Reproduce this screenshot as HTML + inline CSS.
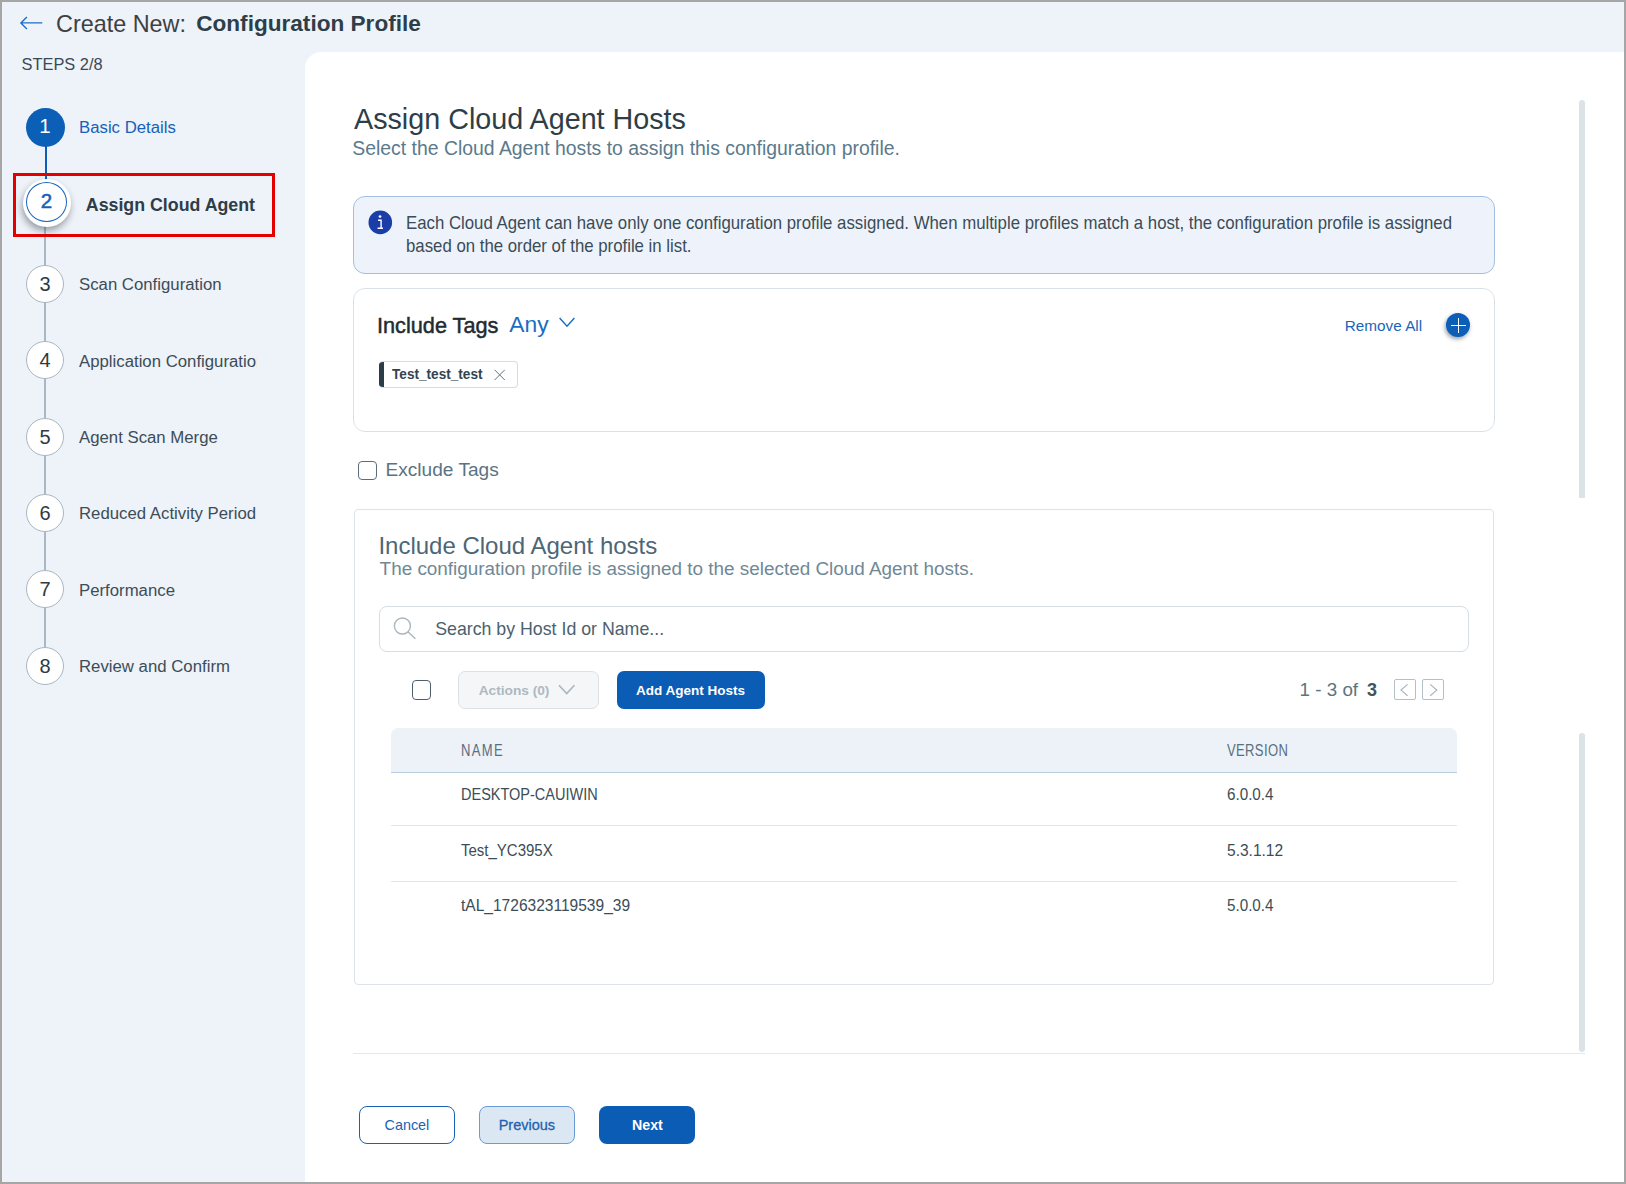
<!DOCTYPE html>
<html><head><meta charset="utf-8">
<style>
*{box-sizing:border-box;margin:0;padding:0}
html,body{width:1626px;height:1184px;overflow:hidden}
body{position:relative;background:#eef2f9;font-family:"Liberation Sans",sans-serif;color:#2c3d47}
.frame{position:absolute;left:0;top:0;width:1626px;height:1184px;border:2px solid #a6a6a6;z-index:50;pointer-events:none}
.t{position:absolute;white-space:nowrap;line-height:1}
.abs{position:absolute}
.panel{position:absolute;left:305px;top:52px;width:1321px;height:1132px;background:#fff;border-top-left-radius:16px}
.circ{position:absolute;border-radius:50%;background:#fff;border:1px solid #a9b7c0}
.vline{position:absolute;width:2px;background:#a9b8c2}
.lbl{font-size:17.3px;color:#3c4d57;transform:scaleX(.97);transform-origin:0 0}
.num{position:absolute;font-size:20px;line-height:1;color:#2f3a40;text-align:center;width:38px}
</style></head>
<body>
<div class="frame"></div>

<!-- header -->
<svg class="abs" style="left:18px;top:14px" width="30" height="20" viewBox="0 0 30 20">
 <path d="M3 8.9 H24.3 M8.9 3 L2.9 8.9 L8.9 14.9" fill="none" stroke="#1d6fc8" stroke-width="1.4" stroke-linecap="butt"/>
</svg>
<div class="t" style="left:56px;top:12.6px;font-size:23.4px;color:#3d4144">Create New:</div>
<div class="t" style="left:196.2px;top:12.5px;font-size:22.6px;font-weight:700;color:#2d3e48">Configuration Profile</div>

<div class="t" style="left:21.5px;top:55.6px;font-size:16.4px;color:#3a4a54">STEPS 2/8</div>

<!-- stepper -->
<div class="abs" style="left:45px;top:146px;width:2px;height:34px;background:#0b5fb6"></div>
<div class="vline" style="left:44px;top:224px;height:42px"></div>
<div class="vline" style="left:44px;top:302px;height:59px"></div>
<div class="vline" style="left:44px;top:378px;height:59px"></div>
<div class="vline" style="left:44px;top:455px;height:59px"></div>
<div class="vline" style="left:44px;top:531px;height:59px"></div>
<div class="vline" style="left:44px;top:607px;height:59px"></div>

<div class="abs" style="left:25.8px;top:107.8px;width:39.2px;height:39.2px;border-radius:50%;background:#0b5fb6"></div>
<div class="num" style="left:26px;top:115.5px;color:#fff;font-size:20.5px">1</div>
<div class="t lbl" style="left:79.4px;top:119.4px;color:#1562b8">Basic Details</div>

<div class="abs" style="left:13px;top:173px;width:262px;height:64px;border:3px solid #e50000"></div>
<div class="abs" style="left:23px;top:179.3px;width:48px;height:47.6px;border-radius:50%;background:#fff;box-shadow:-1px 4px 7px rgba(30,40,50,.42)"></div>
<div class="abs" style="left:25.8px;top:181.9px;width:41.4px;height:40.4px;border-radius:50%;border:1.3px solid #1a67c0"></div>
<div class="num" style="left:27.5px;top:191.3px;color:#1a5fb4;font-size:20.5px;-webkit-text-stroke:0.55px #1a5fb4">2</div>
<div class="t" style="left:85.8px;top:197.2px;font-size:17.8px;font-weight:700;color:#2d3e48">Assign Cloud Agent</div>

<div class="circ" style="left:26px;top:265px;width:38px;height:38px"></div>
<div class="num" style="left:26px;top:274px">3</div>
<div class="t lbl" style="left:78.5px;top:276.2px">Scan Configuration</div>

<div class="circ" style="left:26px;top:341.3px;width:38px;height:38px"></div>
<div class="num" style="left:26px;top:350.3px">4</div>
<div class="t lbl" style="left:78.5px;top:352.6px;width:182.8px;overflow:hidden">Application Configuration</div>

<div class="circ" style="left:26px;top:417.6px;width:38px;height:38px"></div>
<div class="num" style="left:26px;top:426.6px">5</div>
<div class="t lbl" style="left:78.5px;top:429px">Agent Scan Merge</div>

<div class="circ" style="left:26px;top:493.9px;width:38px;height:38px"></div>
<div class="num" style="left:26px;top:502.9px">6</div>
<div class="t lbl" style="left:78.5px;top:505.3px">Reduced Activity Period</div>

<div class="circ" style="left:26px;top:570.2px;width:38px;height:38px"></div>
<div class="num" style="left:26px;top:579.2px">7</div>
<div class="t lbl" style="left:78.5px;top:581.7px">Performance</div>

<div class="circ" style="left:26px;top:646.5px;width:38px;height:38px"></div>
<div class="num" style="left:26px;top:655.5px">8</div>
<div class="t lbl" style="left:78.5px;top:658.1px">Review and Confirm</div>

<!-- main panel -->
<div class="panel"></div>

<div class="t" style="left:353.7px;top:103.5px;font-size:30px;color:#2d3e48;transform:scaleX(.957);transform-origin:0 0">Assign Cloud Agent Hosts</div>
<div class="t" style="left:352.3px;top:138.8px;font-size:19.4px;color:#5b7a8c">Select the Cloud Agent hosts to assign this configuration profile.</div>

<!-- info box -->
<div class="abs" style="left:353px;top:196px;width:1142px;height:77.5px;background:#eef3fb;border:1px solid #a3bfe2;border-radius:12px"></div>
<svg class="abs" style="left:368px;top:210px" width="25" height="25" viewBox="0 0 25 25"><circle cx="12.3" cy="12.4" r="11.8" fill="#1b3da8"/><circle cx="12" cy="6.5" r="1.35" fill="#fff"/><path d="M10 10.3 H13.1 V17.6 M9.6 18.2 H15" fill="none" stroke="#fff" stroke-width="1.4"/></svg>
<div class="t" style="left:406.4px;top:215px;font-size:17.8px;color:#3a4c57;transform:scaleX(.944);transform-origin:0 0">Each Cloud Agent can have only one configuration profile assigned. When multiple profiles match a host, the configuration profile is assigned</div>
<div class="t" style="left:406.4px;top:237.8px;font-size:17.8px;color:#3a4c57;transform:scaleX(.944);transform-origin:0 0">based on the order of the profile in list.</div>

<!-- include tags -->
<div class="abs" style="left:353px;top:288px;width:1142px;height:143.5px;border:1px solid #dbe2e7;border-radius:12px"></div>
<div class="t" style="left:376.8px;top:315.2px;font-size:22.6px;color:#1f2b31;-webkit-text-stroke:0.5px #1f2b31;transform:scaleX(.96);transform-origin:0 0">Include Tags</div>
<div class="t" style="left:509.3px;top:312.5px;font-size:22.8px;color:#1a6cc2">Any</div>
<svg class="abs" style="left:556px;top:313px" width="24" height="18" viewBox="0 0 24 18"><path d="M3.6 5 L11 13.3 L18.4 5" fill="none" stroke="#1a6cc2" stroke-width="1.4"/></svg>
<div class="t" style="left:1344.8px;top:318px;font-size:15.3px;color:#1866ba">Remove All</div>
<div class="abs" style="left:1446px;top:313px;width:24px;height:24px;border-radius:50%;background:#0b5fb6;box-shadow:-1px 2px 4px rgba(20,40,60,.45)"></div>
<div class="abs" style="left:1451px;top:324.5px;width:15px;height:1.5px;background:#fff"></div>
<div class="abs" style="left:1457.6px;top:318px;width:1.5px;height:15px;background:#fff"></div>

<div class="abs" style="left:378.5px;top:360.6px;width:139.3px;height:27.6px;border:1px solid #d5dde3;border-left:0;border-radius:4px;overflow:hidden"><div style="position:absolute;left:0;top:-1px;width:5.4px;height:27.6px;background:#2b3d47"></div></div>
<div class="t" style="left:391.8px;top:366.5px;font-size:14.8px;font-weight:700;color:#33444e;transform:scaleX(.92);transform-origin:0 0">Test_test_test</div>
<svg class="abs" style="left:492px;top:367px" width="16" height="16" viewBox="0 0 16 16"><path d="M2.6 2.8 L12.8 13 M12.8 2.8 L2.6 13" fill="none" stroke="#66757e" stroke-width="1"/></svg>

<!-- exclude tags -->
<div class="abs" style="left:358px;top:461px;width:19px;height:19px;border:1.5px solid #5a6f7d;border-radius:4px"></div>
<div class="t" style="left:385.5px;top:460px;font-size:19.1px;color:#5a7383">Exclude Tags</div>

<!-- hosts section -->
<div class="abs" style="left:354px;top:509px;width:1140px;height:475.5px;border:1px solid #dde3e8;border-radius:4px"></div>
<div class="t" style="left:378.4px;top:533.8px;font-size:24px;color:#4d6676">Include Cloud Agent hosts</div>
<div class="t" style="left:379.6px;top:560.3px;font-size:18.9px;color:#708896">The configuration profile is assigned to the selected Cloud Agent hosts.</div>

<div class="abs" style="left:379.4px;top:606.3px;width:1089.2px;height:45.3px;border:1px solid #d6dee4;border-radius:8px"></div>
<svg class="abs" style="left:390px;top:614px" width="30" height="28" viewBox="0 0 30 28"><circle cx="12.4" cy="12" r="8" fill="none" stroke="#a7b5bd" stroke-width="1.35"/><path d="M18.2 17.9 L25.4 24.8" stroke="#a7b5bd" stroke-width="1.35"/></svg>
<div class="t" style="left:435.2px;top:621px;font-size:17.75px;color:#4b616e">Search by Host Id or Name...</div>

<div class="abs" style="left:412px;top:680px;width:19px;height:19.5px;border:1.5px solid #4f5f69;border-radius:4px"></div>
<div class="abs" style="left:458.3px;top:671px;width:140.5px;height:37.8px;background:#f4f6f8;border:1px solid #dbe2e7;border-radius:7px"></div>
<div class="t" style="left:478.7px;top:683.5px;font-size:13.7px;font-weight:700;color:#adb9c1">Actions (0)</div>
<svg class="abs" style="left:555px;top:681px" width="24" height="16" viewBox="0 0 24 16"><path d="M4 4.2 L11.7 12.6 L19.4 4.2" fill="none" stroke="#aab6be" stroke-width="1.6"/></svg>
<div class="abs" style="left:617px;top:671px;width:147.7px;height:37.8px;background:#0b5cb5;border-radius:7px"></div>
<div class="t" style="left:636px;top:683.8px;font-size:13.5px;font-weight:700;color:#fff">Add Agent Hosts</div>

<div class="t" style="left:1299.6px;top:680.6px;font-size:18.8px;color:#5c7482">1 - 3 of<b style="color:#3e5562;margin-left:9px;font-size:18px">3</b></div>
<div class="abs" style="left:1393.5px;top:678.7px;width:22px;height:21px;border:1.5px solid #b3c0c8;border-radius:2px"></div>
<svg class="abs" style="left:1393.5px;top:678.7px" width="22" height="21" viewBox="0 0 22 21"><path d="M13.6 5.4 L7 11.1 L13.6 16.8" fill="none" stroke="#a9b6be" stroke-width="1.2"/></svg>
<div class="abs" style="left:1422px;top:678.7px;width:22px;height:21px;border:1.5px solid #b3c0c8;border-radius:2px"></div>
<svg class="abs" style="left:1422px;top:678.7px" width="22" height="21" viewBox="0 0 22 21"><path d="M8.2 5.4 L14.8 11.1 L8.2 16.8" fill="none" stroke="#a9b6be" stroke-width="1.2"/></svg>

<!-- table -->
<div class="abs" style="left:391px;top:728px;width:1066px;height:45px;background:#edf2f9;border-bottom:1px solid #b9cde2;border-radius:7px 7px 0 0"></div>
<div class="t" style="left:461.3px;top:741.6px;font-size:16.5px;color:#586f7e;letter-spacing:1.7px;transform:scaleX(.79);transform-origin:0 0">NAME</div>
<div class="t" style="left:1227px;top:741.6px;font-size:16.5px;color:#586f7e;letter-spacing:0.45px;transform:scaleX(.79);transform-origin:0 0">VERSION</div>

<div class="t" style="left:461px;top:786.8px;font-size:16px;color:#3b4d57;transform:scaleX(.906);transform-origin:0 0">DESKTOP-CAUIWIN</div>
<div class="t" style="left:1227px;top:786.8px;font-size:16px;color:#3b4d57;transform:scaleX(.95);transform-origin:0 0">6.0.0.4</div>
<div class="abs" style="left:391px;top:825px;width:1066px;height:1px;background:#e0e6eb"></div>
<div class="t" style="left:461px;top:842.5px;font-size:16px;color:#3b4d57;transform:scaleX(.9375);transform-origin:0 0">Test_YC395X</div>
<div class="t" style="left:1227px;top:842.5px;font-size:16px;color:#3b4d57;transform:scaleX(.97);transform-origin:0 0">5.3.1.12</div>
<div class="abs" style="left:391px;top:881px;width:1066px;height:1px;background:#e0e6eb"></div>
<div class="t" style="left:461px;top:898.2px;font-size:16px;color:#3b4d57;transform:scaleX(.971);transform-origin:0 0">tAL_1726323119539_39</div>
<div class="t" style="left:1227px;top:898.2px;font-size:16px;color:#3b4d57;transform:scaleX(.95);transform-origin:0 0">5.0.0.4</div>

<!-- scrollbars -->
<div class="abs" style="left:1579px;top:100px;width:6px;height:397.5px;background:#dbe3e7;border-radius:3px 3px 0 0"></div>
<div class="abs" style="left:1579px;top:732.5px;width:6px;height:319.5px;background:#dbe3e7;border-radius:3px"></div>

<!-- footer -->
<div class="abs" style="left:353px;top:1053px;width:1232px;height:1px;background:#e3e8ec"></div>
<div class="abs" style="left:359px;top:1106px;width:96px;height:38px;border:1.5px solid #1a62b5;border-radius:8px"></div>
<div class="t" style="left:384.5px;top:1118.2px;font-size:14.4px;color:#1a62b5">Cancel</div>
<div class="abs" style="left:479px;top:1106px;width:96px;height:38px;background:#dce7f4;border:1.2px solid #6a9bd6;border-radius:8px"></div>
<div class="t" style="left:498.7px;top:1117.6px;font-size:14.5px;color:#1f62b0;-webkit-text-stroke:0.3px #1f62b0">Previous</div>
<div class="abs" style="left:599px;top:1106px;width:96px;height:38px;background:#0b5cb5;border-radius:8px"></div>
<div class="t" style="left:632px;top:1118.2px;font-size:14.2px;font-weight:700;color:#fff">Next</div>


</body></html>
